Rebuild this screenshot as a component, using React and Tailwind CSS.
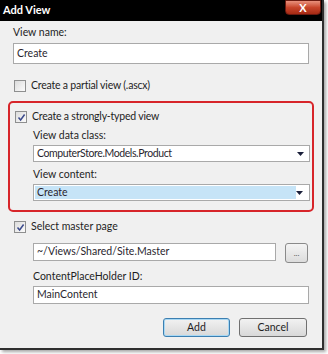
import React from 'react'

const font = { fontFamily: 'Lato, "Noto Sans", sans-serif' }

function Check({ checked }) {
  return (
    <span className="flex h-[12px] w-[12px] items-center justify-center border border-[#8e8f8f] bg-gradient-to-br from-[#dcdcdc] to-[#fbfbfb]">
      {checked && (
        <svg width="9" height="9" viewBox="0 0 9 9">
          <path d="M1.5 4.5 L3.6 7 L7.6 1.5" fill="none" stroke="#3b4a8c" strokeWidth="1.5" />
        </svg>
      )}
    </span>
  )
}

function Arrow() {
  return (
    <svg width="7" height="4" viewBox="0 0 7 4" className="mr-[5px]">
      <path d="M0 0 H7 L3.5 4 Z" fill="#1a1f3a" />
    </svg>
  )
}

export default function App() {
  return (
    <div className="h-[354px] w-[328px] overflow-hidden bg-white text-[10.5px] text-[#1e1e1e]" style={font}>
      <div className="flex h-[350px] w-[324px] flex-col border-b-[2px] border-r-[2px] border-[#2f2f2f] shadow-[2px_2px_3px_rgba(0,0,0,0.35)]">
        <div className="flex h-[21px] shrink-0 items-start justify-between bg-black">
          <span className="ml-[3px] mt-[3px] text-[11px] font-bold leading-[14px] text-white">Add View</span>
          <span className="mr-[1px] flex h-[15px] w-[36px] items-center justify-center rounded-b-[4px] border border-[#6b1a10] bg-gradient-to-b from-[#e8907c] via-[#c8452b] to-[#a62a14] text-[11px] font-bold leading-none text-white">
            X
          </span>
        </div>
        <div className="flex flex-1 flex-col bg-[#f0f0f0] px-[13px]">
          <div className="mt-[4px] h-[14px] leading-[14px]">View name:</div>
          <div className="mt-[4px] flex h-[21px] w-[296px] items-center border border-[#a9a9a9] bg-white px-[3px] text-[#2a1f2e]">Create</div>

          <div className="mt-[16px] flex h-[12px] items-center gap-[5px] pl-[1px]">
            <Check />
            <span className="tracking-[-0.2px]">Create a partial view (.ascx)</span>
          </div>

          <div className="-mx-[5px] mt-[9px] flex h-[111px] flex-col rounded-[5px] border-[2px] border-[#d7252a] px-[4px]">
            <div className="mt-[8px] flex h-[12px] items-center gap-[5px] pl-[1px]">
              <Check checked />
              <span className="tracking-[-0.2px]">Create a strongly-typed view</span>
            </div>
            <div className="ml-[19px] flex flex-col">
              <div className="mt-[5px] h-[14px] leading-[14px]">View data class:</div>
              <div className="mt-[3px] flex h-[17px] w-[277px] items-center justify-between border border-[#a9a9a9] bg-white pl-[3px] text-[#2a1f2e]">
                <span className="tracking-[-0.4px]">ComputerStore.Models.Product</span>
                <Arrow />
              </div>
              <div className="mt-[5px] h-[14px] leading-[14px]">View content:</div>
              <div className="mt-[3px] flex h-[17px] w-[277px] items-center justify-between border border-[#a9a9a9] bg-white p-[1px] text-[#2a1f2e]">
                <span className="flex h-full flex-1 items-center bg-[#c6e4f7] pl-[2px]">Create</span>
                <Arrow />
              </div>
            </div>
          </div>

          <div className="mt-[9px] flex h-[12px] items-center gap-[5px] pl-[1px]">
            <Check checked />
            <span>Select master page</span>
          </div>

          <div className="ml-[20px] mt-[10px] flex items-start gap-[9px]">
            <div className="flex h-[18px] w-[243px] items-center border border-[#a9a9a9] bg-white px-[3px] text-[#2a1f2e]">~/Views/Shared/Site.Master</div>
            <div className="flex h-[20px] w-[23px] items-center justify-center rounded-[3px] border border-[#8a8a8a] bg-gradient-to-b from-[#f4f4f4] to-[#dcdcdc] text-[8px] leading-none text-[#555]">...</div>
          </div>

          <div className="ml-[20px] mt-[6px] h-[14px] leading-[14px]">ContentPlaceHolder ID:</div>
          <div className="ml-[20px] mt-[3px] flex h-[18px] w-[276px] items-center border border-[#a9a9a9] bg-white px-[3px] text-[#2a1f2e]">MainContent</div>

          <div className="mt-[14px] flex justify-end gap-[9px] pr-[2px]">
            <div className="flex h-[19px] w-[67px] items-center justify-center rounded-[3px] border border-[#3c7fb1] bg-gradient-to-b from-[#f2f2f2] to-[#d8d8d8] shadow-[inset_0_0_0_1px_#a8d8f4]">Add</div>
            <div className="flex h-[19px] w-[68px] items-center justify-center rounded-[3px] border border-[#707070] bg-gradient-to-b from-[#f2f2f2] to-[#d8d8d8]">Cancel</div>
          </div>
        </div>
      </div>
    </div>
  )
}
